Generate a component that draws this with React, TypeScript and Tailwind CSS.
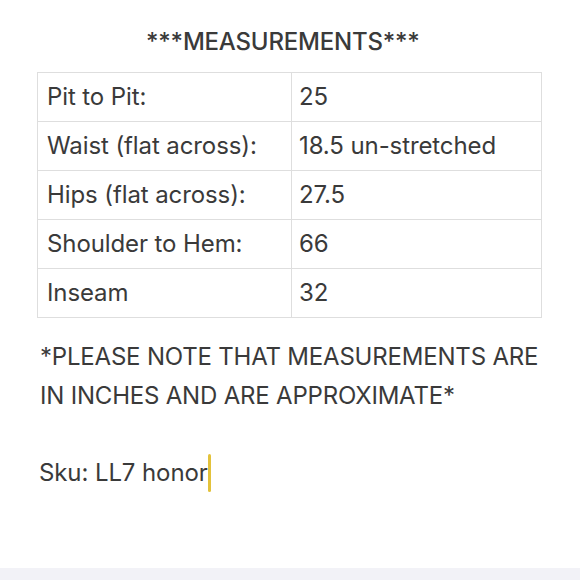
const rows: [string, string][] = [
  ["Pit to Pit:", "25"],
  ["Waist (flat across):", "18.5 un-stretched"],
  ["Hips (flat across):", "27.5"],
  ["Shoulder to Hem:", "66"],
  ["Inseam", "32"],
];

export default function App() {
  return (
    <div
      className="w-[580px] h-[580px] bg-white text-[#3a3a3a] flex flex-col overflow-hidden"
      style={{ fontFamily: "Inter, Roboto, sans-serif" }}
    >
      <div className="flex-1 px-[37px]">
        <h1 className="pt-[28px] pl-[109px] text-[24px] font-medium leading-[28px] tracking-[-0.2px]">
          ***MEASUREMENTS***
        </h1>

        <table className="mt-[16px] w-[505px] border-collapse text-[24px] tracking-[-0.1px]">
          <tbody>
            {rows.map(([label, value]) => (
              <tr key={label} className="h-[49px]">
                <td className="w-[254px] border border-[#dedede] pl-[9px] align-middle">{label}</td>
                <td className="border border-[#dedede] pl-[7px] align-middle">{value}</td>
              </tr>
            ))}
          </tbody>
        </table>

        <p className="mt-[19px] pl-[3px] text-[24px] leading-[39px] tracking-[-0.2px]">
          *PLEASE NOTE THAT MEASUREMENTS ARE
          <br />
          IN INCHES AND ARE APPROXIMATE*
        </p>

        <p className="mt-[37px] pl-[2px] text-[24px] leading-[42px] tracking-[-0.1px] flex items-center">
          Sku: LL7 honor
          <span className="inline-block w-[3px] h-[38px] rounded-full bg-[#e3c23b]" />
        </p>
      </div>
      <div className="h-[12px] bg-[#f2f2f7]" />
    </div>
  );
}
